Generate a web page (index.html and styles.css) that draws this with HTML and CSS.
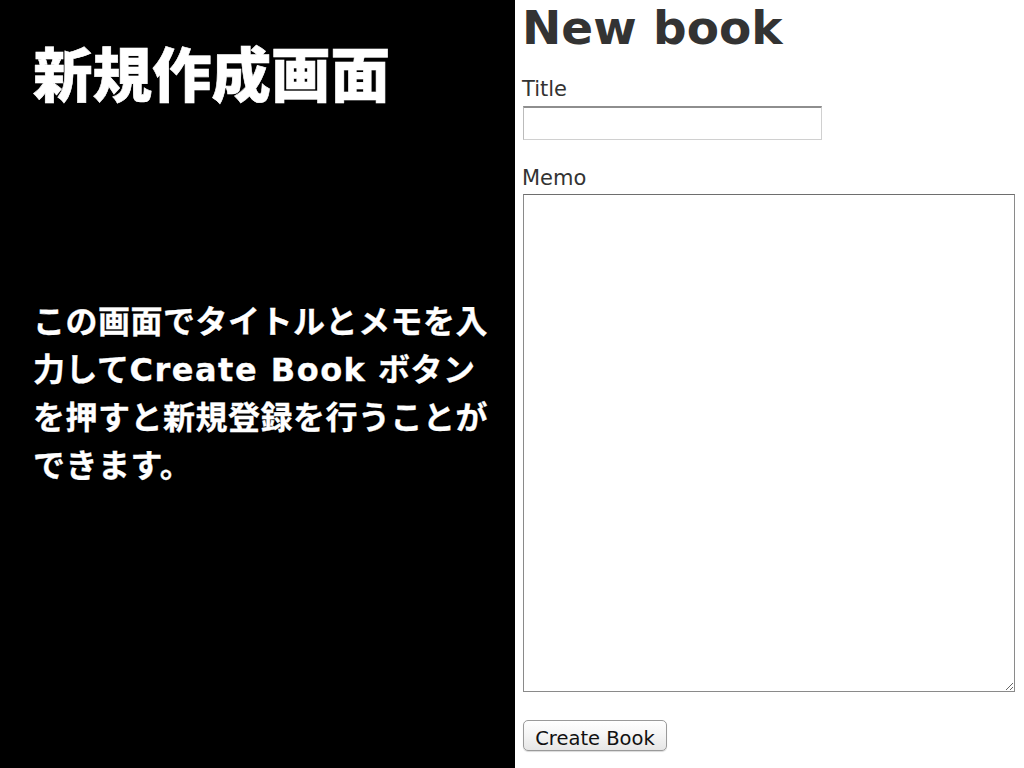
FILE: index.html
```html
<!DOCTYPE html>
<html lang="ja">
<head>
<meta charset="utf-8">
<title>新規作成画面</title>
<link rel="stylesheet" href="styles.css">
</head>
<body>
<div class="slide">
  <section class="explain">
    <h1 class="explain-title">新規作成画面</h1>
    <p class="explain-text">この画面でタイトルとメモを入<br>力して<span class="latin">Create Book</span> ボタン<br>を押すと新規登録を行うことが<br>できます。</p>
  </section>
  <section class="page">
    <h1 class="page-title">New book</h1>
    <form class="book-form">
      <label class="field-label" for="book_title">Title</label>
      <input class="text-input" id="book_title" type="text">
      <label class="field-label memo-label" for="book_memo">Memo</label>
      <textarea class="memo-input" id="book_memo"></textarea>
      <button class="submit-btn" type="button">Create Book</button>
    </form>
  </section>
</div>
</body>
</html>
```

FILE: styles.css
```css
html, body {
  margin: 0;
  padding: 0;
  background: #fff;
}

.slide {
  display: flex;
  width: 1024px;
  height: 768px;
  overflow: hidden;
}

.explain {
  width: 515px;
  flex: none;
  background: #000;
  color: #fff;
  font-family: "DejaVu Sans", "Noto Sans CJK JP", sans-serif;
  font-weight: 700;
  padding: 0 0 0 33px;
  box-sizing: border-box;
}

.explain-title {
  margin: 36px 0 0 0;
  font-family: "Noto Sans CJK JP", sans-serif;
  font-weight: 900;
  font-size: 59.5px;
  line-height: 70px;
  letter-spacing: 0;
  -webkit-text-stroke: 0.6px #fff;
}

.explain-text {
  margin: 192px 0 0 0;
  font-size: 32px;
  line-height: 48px;
  letter-spacing: 0.5px;
  font-weight: 700;
  -webkit-text-stroke: 0.3px #fff;
}

.latin {
  letter-spacing: 1.5px;
}

.page {
  flex: 1;
  padding: 0 0 0 7px;
  font-family: "DejaVu Sans", Verdana, sans-serif;
  color: #333;
}

.page-title {
  margin: 2px 0 0 0;
  font-size: 47px;
  line-height: 52px;
  font-weight: 700;
  color: #333;
}

.book-form {
  display: flex;
  flex-direction: column;
  align-items: flex-start;
}

.field-label {
  display: block;
  margin-top: 23px;
  font-size: 21px;
  line-height: 24px;
  color: #333;
}

.text-input {
  margin: 5px 0 0 1px;
  width: 299px;
  height: 34px;
  box-sizing: border-box;
  border: 1px solid #d0d0d0;
  border-top: 2px solid #8e8e8e;
  border-left: 1px solid #bbbbbb;
  background: #fff;
  padding: 0 4px;
  font-size: 18px;
}

.memo-label {
  margin-top: 26px;
}

.memo-input {
  margin: 4px 0 0 1px;
  width: 492px;
  height: 498px;
  box-sizing: border-box;
  border: 1px solid #8a8a8a;
  border-top-color: #6e6e6e;
  background: #fff;
  font-size: 18px;
  resize: both;
}

.submit-btn {
  margin: 28px 0 0 1px;
  width: 144px;
  height: 31px;
  box-sizing: border-box;
  border: 1px solid #9a9a9a;
  border-radius: 5px;
  background: linear-gradient(#ffffff 0%, #f4f4f4 50%, #e6e6e6 100%);
  box-shadow: 0 1px 1px rgba(0, 0, 0, 0.15);
  font-family: "DejaVu Sans", Verdana, sans-serif;
  font-size: 19.5px;
  color: #111;
  padding: 6px 0 0 0;
  line-height: 24px;
}
```
